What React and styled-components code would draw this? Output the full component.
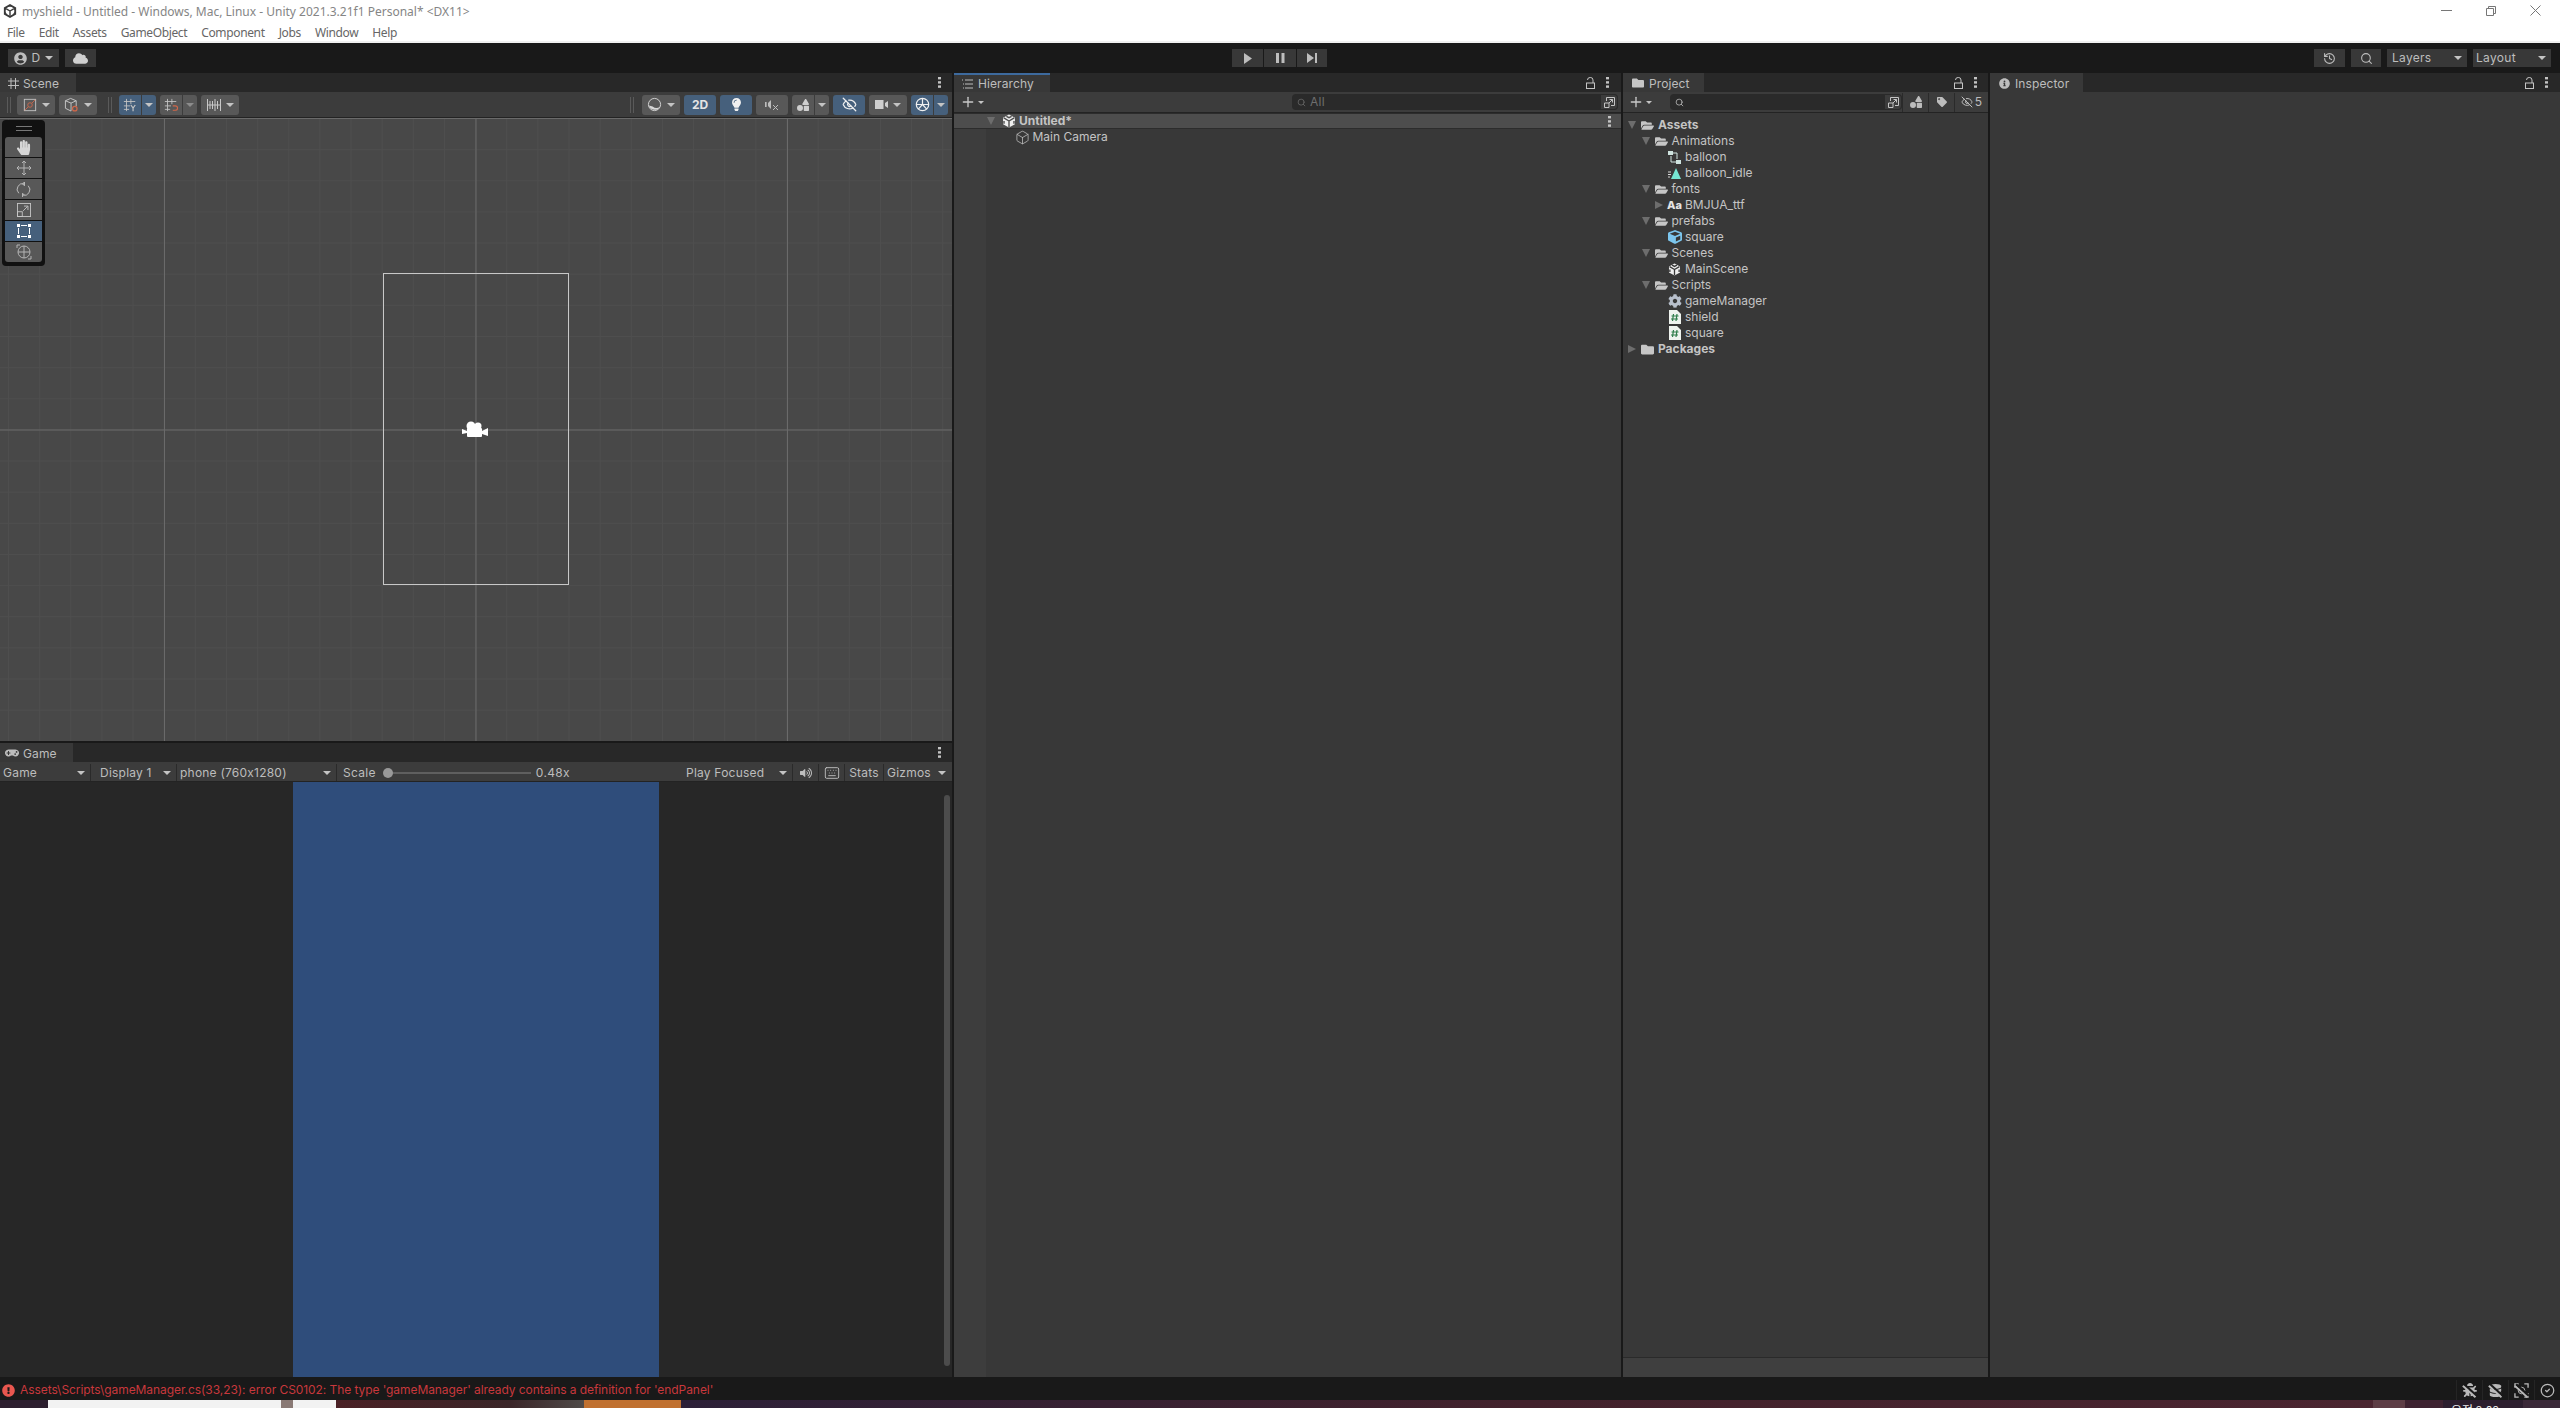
import React from 'react';
import styled, { createGlobalStyle } from 'styled-components';
import { FaHandPaper, FaGamepad, FaInfoCircle, FaUserCircle, FaCloud, FaFolder, FaFolderOpen, FaCube, FaCog, FaTag, FaVolumeUp, FaExclamationCircle, FaBug, FaDatabase, FaLightbulb, FaShapes } from 'react-icons/fa';
import { History, Search, EyeOff, Keyboard, CircleCheck, Box, Plus } from 'lucide-react';

const Global = createGlobalStyle`
  html, body { margin: 0; padding: 0; background: #191919; }
  * { box-sizing: border-box; }
  svg { display: block; flex: none; }
`;

const Page = styled.div`
  width: 2560px; height: 1408px; overflow: hidden; display: flex; flex-direction: column;
  font: 12px/16px Inter, "Liberation Sans", sans-serif; color: #c4c4c4; background: #191919;
`;
const TitleBar = styled.div`
  height: 21px; background: #fff; display: flex; align-items: center; padding-left: 3px; gap: 5px;
  font: 12px/21px "Noto Sans", sans-serif; color: #858585; flex: none;
`;
const TitleText = styled.span`
  padding-top: 2px;
`;
const WindowControls = styled.div`
  margin-left: auto; display: flex; gap: 34px; padding-right: 19px; color: #777; align-items: center;
`;
const MenuBar = styled.div`
  height: 22px; background: #fff; border-bottom: 2px solid #f0f0f0; display: flex; flex: none; padding-left: 7px; gap: 14px;
  font: 12px/23px "Noto Sans", sans-serif; color: #666; letter-spacing: -0.03em;
`;
const MainToolbar = styled.div`
  height: 30px; flex: none; background: #191919; display: grid; grid-template-columns: 1fr auto 1fr; padding: 6px 9px 6px 8px;
`;
const Cluster = styled.div`
  display: flex; gap: ${p => p.$gap ?? 6}px; justify-content: ${p => p.$end ? 'flex-end' : 'flex-start'};
`;
const TopBtn = styled.div`
  width: ${p => p.$w}px; height: 18px; background: #383838; display: flex; align-items: center;
  justify-content: ${p => p.$between ? 'space-between' : 'center'}; gap: 5px; color: #bdbdbd;
  padding: ${p => p.$between ? `0 5px 0 ${p.$pl ?? 3}px` : '0'}; font-size: 12px; letter-spacing: .3px;
`;
const Caret = styled.i`
  display: block; flex: none; width: 0; height: 0; border-left: ${p => p.$s ?? 4}px solid transparent;
  border-right: ${p => p.$s ?? 4}px solid transparent; border-top: ${p => p.$s ?? 4}px solid ${p => p.$c ?? '#c4c4c4'};
`;
const Workspace = styled.div`
  flex: 1; min-height: 0; display: grid; grid-template-columns: 952px 667px 365px 570px; column-gap: 2px; padding-bottom: 1px;
  & > * { min-width: 0; }
`;
const LeftColumn = styled.div`
  display: grid; grid-template-rows: 668px 1fr; row-gap: 2px; min-height: 0;
`;
const Panel = styled.section`
  display: flex; flex-direction: column; background: #383838; min-height: 0; position: relative;
`;
const TabStrip = styled.div`
  height: 19px; flex: none; background: #282828; display: flex; align-items: stretch;
`;
const Tab = styled.div`
  width: ${p => p.$w}px; background: #383838; display: flex; align-items: center; gap: ${p => p.$gap ?? 4}px;
  padding-left: ${p => p.$pl ?? 8}px; padding-top: ${p => p.$blue ? 0 : 1}px; color: #bdbdbd; letter-spacing: .1px; line-height: 19px;
  border-top: ${p => p.$blue ? '2px solid #3d6a9e' : '0'};
`;
const TabTools = styled.div`
  margin-left: auto; display: flex; align-items: center; gap: 11px; padding-right: ${p => p.$pr ?? 11}px; color: #c4c4c4;
`;
const Bar = styled.div`
  height: ${p => p.$h ?? 26}px; flex: none; background: #3c3c3c; border-bottom: 1px solid #232323; display: flex; align-items: center;
  padding: ${p => p.$pad ?? '0 4px 0 6px'};
`;
const BtnGroup = styled.div`
  display: flex; gap: 4px; align-items: center;
`;
const Handle = styled.div`
  width: 4px; height: 16px; border-left: 1px solid #5a5a5a; border-right: 1px solid #5a5a5a; margin: 0 ${p => p.$mr ?? 8}px 0 ${p => p.$ml ?? 0}px;
`;
const SceneBtn = styled.div`
  width: ${p => p.$w}px; height: 20px; border-radius: 3px; display: flex; align-items: center; justify-content: center;
  background: ${p => p.$on ? '#46607c' : '#585858'}; gap: 5px; color: #e4e4e4; font-weight: 700; font-size: 12px;
`;
const SplitPair = styled.div`
  display: flex; width: 37px; height: 20px; border-radius: 3px; overflow: hidden; gap: 1px;
`;
const SplitMain = styled.div`
  width: 22px; display: flex; align-items: center; justify-content: center; background: ${p => p.$on ? '#46607c' : '#585858'};
`;
const SplitArrow = styled.div`
  flex: 1; display: flex; align-items: center; justify-content: center; background: ${p => p.$on ? '#46607c' : '#585858'};
`;
const Spacer = styled.div`flex: 1;`;

const SceneView = styled.div`
  flex: 1; position: relative; overflow: hidden; background-color: #484848;
  background-image:
    linear-gradient(to right, #6a6a6a 1px, transparent 1px),
    linear-gradient(to bottom, #6a6a6a 1px, transparent 1px),
    linear-gradient(to right, #4e4e4e 1px, transparent 1px),
    linear-gradient(to bottom, #4e4e4e 1px, transparent 1px);
  background-size: 311.5px 311.5px, 311.5px 311.5px, 31.15px 31.15px, 31.15px 31.15px;
  background-position: 164px 0, 0 0, 8px 0, 0 0;
`;
const Overlay = styled.div`
  position: absolute; left: 2px; top: 2px; width: 43px; height: 146px; background: #111; border-radius: 4px;
  padding: 0 3px; display: flex; flex-direction: column; gap: 1px;
`;
const OverlayGrip = styled.div`
  height: 16px; flex: none; display: flex; align-items: center; justify-content: center;
  &::before { content: ''; width: 16px; height: 3px; border-top: 1px solid #777; border-bottom: 1px solid #777; }
`;
const ToolBtn = styled.div`
  height: 20px; flex: none; display: flex; align-items: center; justify-content: center; background: ${p => p.$on ? '#46607c' : '#585858'};
  color: #c8c8c8;
  border-radius: ${p => p.$first ? '3px 3px 0 0' : p.$last ? '0 0 3px 3px' : '0'};
`;
const CameraFrame = styled.div`
  position: absolute; left: 383px; top: 155px; width: 186px; height: 312px; border: 1px solid #c8c8c8;
`;
const CameraGizmo = styled.div`
  position: absolute; left: 461px; top: 302px; color: #fff;
`;

const GameBar = styled.div`
  height: 20px; flex: none; background: #3c3c3c; border-bottom: 1px solid #232323; display: flex; align-items: stretch; padding-top: 2px;
`;
const GameCell = styled.div`
  width: ${p => p.$w}px; flex: none; display: flex; align-items: center; justify-content: ${p => p.$center ? 'center' : 'space-between'};
  padding: ${p => p.$pad ?? '0 5px 0 3px'}; border-right: ${p => p.$nb ? '0' : '1px solid #2a2a2a'}; letter-spacing: .22px; color: #bdbdbd;
`;
const ScaleCell = styled.div`
  flex: 1; display: flex; align-items: center; padding-left: 6px; letter-spacing: .3px; color: #bdbdbd;
`;
const ScaleTrack = styled.div`
  width: 144px; height: 2px; background: #5f5f5f; margin: 0 5px 0 11px; position: relative;
  &::before { content: ''; position: absolute; left: -4px; top: -4px; width: 10px; height: 10px; border-radius: 50%; background: #999; }
`;
const GameView = styled.div`
  flex: 1; position: relative; background: #272727; display: flex; justify-content: center;
`;
const GameScreen = styled.div`
  width: 366px; background: #2f4d7b;
`;
const GameScroll = styled.div`
  position: absolute; left: 944px; top: 13px; bottom: 11px; width: 6px; background: #4c4c4c; border-radius: 3px;
`;

const TreeArea = styled.div`
  flex: 1; padding-top: ${p => p.$pt ?? 0}px; background: ${p => p.$strip ? 'linear-gradient(to right, #3d3d3d 32px, #383838 32px)' : '#383838'};
`;
const Row = styled.div`
  height: 16px; display: flex; align-items: center; white-space: nowrap; color: #c4c4c4;
  padding-left: ${p => (p.$base ?? 5) + 13.5 * (p.$level ?? 0)}px; font-weight: ${p => p.$bold ? 700 : 400};
  background: ${p => p.$hl ? '#4d4d4d' : 'transparent'}; box-shadow: ${p => p.$hl ? 'inset 0 -1px #2c2c2c, inset 0 1px #2c2c2c' : 'none'};
`;
const ArrowCell = styled.div`
  width: ${p => p.$w ?? 13}px; flex: none; display: flex; align-items: center;
`;
const Down = styled.i`
  display: block; width: 0; height: 0; border-left: 4px solid transparent; border-right: 4px solid transparent; border-top: 8px solid #6d6d6d;
`;
const RightTri = styled.i`
  display: block; width: 0; height: 0; border-top: 4px solid transparent; border-bottom: 4px solid transparent; border-left: 8px solid #6d6d6d;
`;
const IconCell = styled.div`
  width: ${p => p.$w ?? 13}px; height: 14px; flex: none; margin-right: 4px; display: flex; align-items: center; justify-content: center; color: #c4c4c4;
`;
const RowEnd = styled.div`
  margin-left: auto; padding-right: 10px; color: #c4c4c4;
`;
const SearchBox = styled.div`
  height: 16px; background: #2a2a2a; border-radius: 4px; display: flex; align-items: center; padding-left: 5px; gap: 4px; overflow: hidden;
  width: ${p => p.$w}px; margin-left: ${p => p.$ml ?? 0}px; color: #6e6e6e; flex: none; letter-spacing: .3px;
`;
const SearchEnd = styled.div`
  margin-left: auto; width: 18px; height: 16px; background: #3c3c3c; border: 1px solid #2a2a2a; border-radius: 0 4px 4px 0; display: flex; align-items: center; justify-content: center; color: #c4c4c4;
`;
const BarBtn = styled.div`
  width: ${p => p.$w}px; height: 19px; flex: none; display: flex; align-items: center; justify-content: center; gap: 2px; border-left: 1px solid #2a2a2a; color: #bdbdbd; font-size: 12px;
`;
const AddBtn = styled.div`
  display: flex; align-items: center; gap: 2px; color: #c8c8c8;
`;
const AaText = styled.span`
  font-size: 11px; font-weight: 800; color: #e4e4e4; letter-spacing: 0;
`;
const ProjectFooter = styled.div`
  height: 20px; flex: none; background: #3f3f3f; border-top: 1px solid #2a2a2a;
`;

const StatusBar = styled.div`
  height: 22px; flex: none; background: #191919; display: flex; align-items: center; padding: 2px 0 0 2px; gap: 5px;
  color: #c8383c; font-size: 12px; letter-spacing: -0.07px; white-space: nowrap;
`;
const StatusIcons = styled.div`
  margin-left: auto; display: flex; height: 100%; color: #b9b9b9;
`;
const StatusIcon = styled.div`
  width: 26px; display: flex; align-items: center; justify-content: center; border-left: 1px solid #252525; position: relative;
  ${p => p.$slash ? `&::after { content: ''; position: absolute; left: 5px; width: 17px; height: 2px; background: #191919; transform: rotate(42deg); box-shadow: 0 2px 0 #b9b9b9; }` : ''}
`;
const Taskbar = styled.div`
  height: 8px; flex: none; overflow: hidden; display: flex; background: #2c1e2e;
`;
const TaskSeg = styled.div`
  width: ${p => p.$w}px; flex: none; background: ${p => p.$bg};
`;
const TaskClock = styled.div`
  width: 80px; flex: none; padding: 3px 0 0 8px; color: #eee; font: 12px/14px "Noto Sans CJK KR", sans-serif; white-space: nowrap;
`;

const S = ({ w = 14, h = 14, vb = '0 0 16 16', children }) => (
  <svg width={w} height={h} viewBox={vb} fill="none" stroke="currentColor" strokeWidth="1">{children}</svg>
);
const UnityLogo = ({ s = 13, c = '#fff', bg = '#383838' }) => (
  <svg width={s} height={s} viewBox="0 0 16 16">
    <polygon points="8,0.5 14.8,4.2 14.8,11.8 8,15.5 1.2,11.8 1.2,4.2" fill={c} />
    <path d="M8 8V15M8 8L2 4.4M8 8l6-3.6M5 2.6 8 4.2l3-1.6M2.3 8V11M13.7 8V11" stroke={bg} strokeWidth="1.6" fill="none" />
  </svg>
);
const Lock = () => (
  <S w={9} h={12} vb="0 0 9 12"><rect x=".5" y="6" width="8" height="5.5" /><path d="M1.5 3a2.7 2.5 0 0 1 5.5 0V6" /></S>
);
const Kebab = () => (
  <svg width="3" height="11" viewBox="0 0 3 11" fill="currentColor"><rect y="0" width="3" height="2.4" /><rect y="4.2" width="3" height="2.4" /><rect y="8.4" width="3" height="2.4" /></svg>
);
const Hash = () => (
  <S w={11} h={11} vb="0 0 11 11"><path d="M3 0v11M7.5 0v11M0 3h11M0 7.5h11" stroke="#bdbdbd" /></S>
);
const ListIcon = () => (
  <S w={11} h={10} vb="0 0 11 10"><path d="M3 1h8M3 5h8M3 9h8M0 1h1M1 5h1M1 9h1" /></S>
);
const ExpandIcon = () => (
  <S w={11} h={11} vb="0 0 11 11"><path d="M2.5 4V.5h8v8H7M.5 6h4.5v4.5H.5zM5 6l3.5-3.5M5.5 2.5h3v3" /></S>
);
const SnapGrid = ({ glyph }) => (
  <S w={14} h={14}>
    <path d="M4 1v14M9 1v6M1 4h13M1 9h7M1 13h6" />
    {glyph === 'y' ? <path d="M9 8l2.5 3.5L14 8M11.5 11.5V15" strokeWidth="1.4" /> : <path d="M10 9h3a2.5 2.5 0 0 1 0 5h-3" stroke="#d0674a" strokeWidth="1.3" />}
  </S>
);
const Camera = () => (
  <svg width="28" height="20" viewBox="0 0 28 20" fill="#fff">
    <circle cx="10" cy="6" r="4.5" /><circle cx="17" cy="6" r="3.5" /><rect x="6" y="8" width="15" height="9" rx="1" />
    <polygon points="21,11 27,8 27,16 21,14" /><polygon points="6,11 1,9 1,14 6,13" />
  </svg>
);
const ScriptFile = () => (
  <svg width="12" height="14" viewBox="0 0 12 14">
    <path d="M0 0h8l4 4v10H0z" fill="#eef3ee" />
    <path d="M4.5 4 3.5 11M8 4 7 11M2.5 6h7M2 9h7" stroke="#2e7d4a" strokeWidth="1.2" fill="none" />
  </svg>
);
const ClipIcon = () => (
  <svg width="13" height="13" viewBox="0 0 13 13" fill="#cfe3df">
    <rect x="0" y="0" width="5" height="4" /><rect x="8" y="9" width="5" height="4" />
    <path d="M5 2h4v6M8 11H3V5" stroke="#cfe3df" fill="none" />
  </svg>
);
const AnimIcon = () => (
  <svg width="13" height="11" viewBox="0 0 13 11"><polygon points="8,0 13,11 3,11" fill="#75e6d2" /><path d="M0 4h3M0 6.5h3M0 9h2" stroke="#d8d8d8" /></svg>
);
const Tri = ({ c = '#bdbdbd', w = 8, h = 11 }) => (
  <svg width={w} height={h} viewBox="0 0 8 11" fill={c}><polygon points="0,0 8,5.5 0,11" /></svg>
);
const TitleLogo = () => (
  <svg width="14" height="14" viewBox="0 0 16 16">
    <polygon points="8,0 15,4 15,12 8,16 1,12 1,4" fill="#3a3a3a" />
    <circle cx="8" cy="8" r="5" fill="#fff" /><path d="M8 8v5M8 8 3.8 5.5M8 8l4.2-2.5" stroke="#3a3a3a" strokeWidth="1.6" />
  </svg>
);

const projectRows = [
  { l: 0, t: 'Assets', b: true, a: 'd', i: 'open' },
  { l: 1, t: 'Animations', a: 'd', i: 'open' },
  { l: 2, t: 'balloon', i: 'clip' },
  { l: 2, t: 'balloon_idle', i: 'anim' },
  { l: 1, t: 'fonts', a: 'd', i: 'open' },
  { l: 2, t: 'BMJUA_ttf', a: 'r', i: 'aa' },
  { l: 1, t: 'prefabs', a: 'd', i: 'open' },
  { l: 2, t: 'square', i: 'prefab' },
  { l: 1, t: 'Scenes', a: 'd', i: 'open' },
  { l: 2, t: 'MainScene', i: 'unity' },
  { l: 1, t: 'Scripts', a: 'd', i: 'open' },
  { l: 2, t: 'gameManager', i: 'gear' },
  { l: 2, t: 'shield', i: 'script' },
  { l: 2, t: 'square', i: 'script' },
  { l: 0, t: 'Packages', b: true, a: 'r', i: 'folder' },
];
const iconFor = (k) => {
  switch (k) {
    case 'open': return <FaFolderOpen size={13} color="#c6c6c6" />;
    case 'folder': return <FaFolder size={13} color="#c6c6c6" />;
    case 'clip': return <ClipIcon />;
    case 'anim': return <AnimIcon />;
    case 'aa': return <AaText>Aa</AaText>;
    case 'prefab': return <FaCube size={14} color="#7cc6ee" />;
    case 'unity': return <UnityLogo s={13} c="#eee" />;
    case 'gear': return <FaCog size={14} color="#b8c0cc" />;
    default: return <ScriptFile />;
  }
};

export default function App() {
  return (
    <Page>
      <Global />
      <TitleBar>
        <TitleLogo />
        <TitleText>myshield - Untitled - Windows, Mac, Linux - Unity 2021.3.21f1 Personal* &lt;DX11&gt;</TitleText>
        <WindowControls>
          <S w={11} h={11} vb="0 0 11 11"><path d="M0 5.5h11" /></S>
          <S w={10} h={10} vb="0 0 10 10"><path d="M.5 2.5h7v7h-7zM2.5 2.5v-2h7v7h-2" /></S>
          <S w={11} h={11} vb="0 0 11 11"><path d="M.5.5l10 10M10.5.5l-10 10" /></S>
        </WindowControls>
      </TitleBar>
      <MenuBar>
        {['File', 'Edit', 'Assets', 'GameObject', 'Component', 'Jobs', 'Window', 'Help'].map(m => <span key={m}>{m}</span>)}
      </MenuBar>
      <MainToolbar>
        <Cluster>
          <TopBtn $w={51}><FaUserCircle size={13} />D<Caret $s={4} /></TopBtn>
          <TopBtn $w={31}><FaCloud size={15} color="#d0d0d0" /></TopBtn>
        </Cluster>
        <Cluster $gap={1}>
          <TopBtn $w={31}><Tri /></TopBtn>
          <TopBtn $w={32}><svg width="9" height="10" viewBox="0 0 9 10" fill="#bdbdbd"><rect width="3" height="10" /><rect x="5.5" width="3" height="10" /></svg></TopBtn>
          <TopBtn $w={30}><svg width="10" height="10" viewBox="0 0 10 10" fill="#bdbdbd"><polygon points="0,0 7,5 0,10" /><rect x="8" width="2" height="10" /></svg></TopBtn>
        </Cluster>
        <Cluster $end>
          <TopBtn $w={31}><History size={13} /></TopBtn>
          <TopBtn $w={30}><Search size={13} /></TopBtn>
          <TopBtn $w={80} $between $pl={5}>Layers<Caret $s={4} /></TopBtn>
          <TopBtn $w={78} $between>Layout<Caret $s={4} /></TopBtn>
        </Cluster>
      </MainToolbar>
      <Workspace>
        <LeftColumn>
          <Panel>
            <TabStrip>
              <Tab $w={76}><Hash />Scene</Tab>
              <TabTools><Kebab /></TabTools>
            </TabStrip>
            <Bar>
              <Handle $ml={1} $mr={6} />
              <BtnGroup>
                <SceneBtn $w={38}><S w={14} h={14}><rect x="1.5" y="1.5" width="13" height="13" stroke="#c8c8c8" /><circle cx="8" cy="8" r="2.6" stroke="#d0674a" /><path d="M2 14 6 10M10 6l4-4" stroke="#d0674a" /></S><Caret /></SceneBtn>
                <SceneBtn $w={38}><S w={15} h={15}><path d="M7 1.5 13 4v6M7 1.5 1.5 4v8l6 3M1.5 4l6 2.5 5.5-2.5M7.5 6.5V15" stroke="#c8c8c8" /><circle cx="11.5" cy="12.5" r="2.4" stroke="#d0674a" strokeWidth="1.3" /></S><Caret /></SceneBtn>
              </BtnGroup>
              <Handle $ml={11} $mr={7} />
              <BtnGroup>
                <SplitPair><SplitMain $on><SnapGrid glyph="y" /></SplitMain><SplitArrow $on><Caret /></SplitArrow></SplitPair>
                <SplitPair><SplitMain><SnapGrid glyph="m" /></SplitMain><SplitArrow><Caret $c="#8c8c8c" /></SplitArrow></SplitPair>
                <SceneBtn $w={38}><S w={14} h={12} vb="0 0 14 12"><path d="M.5 0v12M13.5 0v12M.5 6h13M3 2v8M5.5 2v8M8 0v12M10.5 2v8" stroke="#c8c8c8" /></S><Caret /></SceneBtn>
              </BtnGroup>
              <Spacer />
              <Handle $mr={8} />
              <BtnGroup>
                <SceneBtn $w={38}><svg width="15" height="15" viewBox="0 0 16 16" fill="none"><circle cx="8" cy="8" r="6.5" stroke="#d8d8d8" /><path d="M2 9a6.5 6.5 0 0 0 12 1a6 6 0 0 1-8 0z" fill="#d8d8d8" /></svg><Caret /></SceneBtn>
                <SceneBtn $w={32} $on>2D</SceneBtn>
                <SceneBtn $w={32} $on><FaLightbulb size={13} color="#f0f0f0" /></SceneBtn>
                <SceneBtn $w={32}><svg width="14" height="12" viewBox="0 0 14 12" fill="#bdbdbd"><rect x="0" y="3" width="1.6" height="5" /><polygon points="3,4 6,1 6,10 3,7" /><path d="M8 6l5 5M13 6l-5 5" stroke="#bdbdbd" fill="none" /></svg></SceneBtn>
                <SplitPair><SplitMain><FaShapes size={12} color="#cfcfcf" /></SplitMain><SplitArrow><Caret /></SplitArrow></SplitPair>
                <SceneBtn $w={32} $on><EyeOff size={15} color="#f0f0f0" /></SceneBtn>
                <SceneBtn $w={38}><svg width="13" height="9" viewBox="0 0 13 9" fill="#cfcfcf"><rect width="8.5" height="9" /><polygon points="10,3 13,1 13,8 10,6" /></svg><Caret /></SceneBtn>
                <SplitPair><SplitMain $on><svg width="15" height="15" viewBox="0 0 16 16" fill="none" stroke="#f0f0f0" strokeWidth="1.3"><circle cx="8" cy="8" r="6.6" /><path d="M1.5 8h13M8 1.5V8L3.5 13M8 8l4.5 5" /></svg></SplitMain><SplitArrow $on><Caret /></SplitArrow></SplitPair>
              </BtnGroup>
            </Bar>
            <SceneView>
              <CameraFrame />
              <CameraGizmo><Camera /></CameraGizmo>
              <Overlay>
                <OverlayGrip />
                <ToolBtn $first><FaHandPaper size={15} color="#d6d6d6" /></ToolBtn>
                <ToolBtn><S w={16} h={16}><path d="M8 1v14M1 8h14M6 3l2-2 2 2M6 13l2 2 2-2M3 6 1 8l2 2M13 6l2 2-2 2" stroke="#b4b4b4" /></S></ToolBtn>
                <ToolBtn><S w={15} h={15}><path d="M3 12A6 6 0 0 1 9 2M13 4a6 6 0 0 1-6 10M9 0v4L7 2zM7 16v-4l2 2" stroke="#c0c0c0" /></S></ToolBtn>
                <ToolBtn><S w={14} h={14}><rect x=".5" y=".5" width="15" height="15" stroke="#c8c8c8" /><rect x=".5" y="10" width="5.5" height="5.5" stroke="#c8c8c8" /><path d="M7 9l5-5M8 3.5h4.5V8" stroke="#c8c8c8" /></S></ToolBtn>
                <ToolBtn $on><svg width="14" height="14" viewBox="0 0 14 14" fill="#fff"><rect width="3" height="3" /><rect x="11" width="3" height="3" /><rect y="11" width="3" height="3" /><rect x="11" y="11" width="3" height="3" /><path d="M4 1.5h6M4 12.5h6M1.5 4v6M12.5 4v6" stroke="#fff" fill="none" /></svg></ToolBtn>
                <ToolBtn $last><S w={16} h={16}><circle cx="8" cy="8" r="6" stroke="#b4b4b4" /><path d="M8 2v12M2 8h12M4 1 1 1v3M12 15h3v-3" stroke="#b4b4b4" /></S></ToolBtn>
              </Overlay>
            </SceneView>
          </Panel>
          <Panel>
            <TabStrip>
              <Tab $w={73} $pl={5}><FaGamepad size={14} />Game</Tab>
              <TabTools><Kebab /></TabTools>
            </TabStrip>
            <GameBar>
              <GameCell $w={91}>Game<Caret /></GameCell>
              <GameCell $w={86} $pad="0 5px 0 9px">Display 1<Caret /></GameCell>
              <GameCell $w={160}>phone (760x1280)<Caret /></GameCell>
              <ScaleCell>Scale<ScaleTrack />0.48x</ScaleCell>
              <GameCell $w={110}>Play Focused<Caret /></GameCell>
              <GameCell $w={26} $center $pad="0"><FaVolumeUp size={12} /></GameCell>
              <GameCell $w={26} $center $pad="0"><Keyboard size={16} strokeWidth={1.4} /></GameCell>
              <GameCell $w={39} $center $pad="0">Stats</GameCell>
              <GameCell $w={68} $nb $pad="0 6px 0 3px">Gizmos<Caret /></GameCell>
            </GameBar>
            <GameView>
              <GameScreen />
              <GameScroll />
            </GameView>
          </Panel>
        </LeftColumn>

        <Panel>
          <TabStrip>
            <Tab $w={96} $blue $gap={5}><ListIcon />Hierarchy</Tab>
            <TabTools $pr={12}><Lock /><Kebab /></TabTools>
          </TabStrip>
          <Bar $h={21} $pad="0 3px 0 6px">
            <AddBtn><Plus size={16} strokeWidth={2} /><Caret $s={3} /></AddBtn>
            <Spacer />
            <SearchBox $w={326}>
              <Search size={9} />All
              <SearchEnd><ExpandIcon /></SearchEnd>
            </SearchBox>
          </Bar>
          <TreeArea $strip>
            <Row $hl $bold $base={33}>
              <ArrowCell $w={15}><Down /></ArrowCell>
              <IconCell><UnityLogo s={14} c="#eee" bg="#4d4d4d" /></IconCell>
              Untitled*
              <RowEnd><Kebab /></RowEnd>
            </Row>
            <Row $level={1} $base={33}>
              <ArrowCell $w={15} />
              <IconCell><Box size={15} strokeWidth={1.2} /></IconCell>
              Main Camera
            </Row>
          </TreeArea>
        </Panel>

        <Panel>
          <TabStrip>
            <Tab $w={81} $pl={9} $gap={5}><FaFolder size={12} color="#c6c6c6" />Project</Tab>
            <TabTools $pr={11}><Lock /><Kebab /></TabTools>
          </TabStrip>
          <Bar $h={21} $pad="0 0 0 5px">
            <AddBtn><Plus size={16} strokeWidth={2} /><Caret $s={3} /></AddBtn>
            <SearchBox $w={232} $ml={18}>
              <Search size={9} color="#c4c4c4" />
              <SearchEnd><ExpandIcon /></SearchEnd>
            </SearchBox>
            <BarBtn $w={26}><FaShapes size={12} /></BarBtn>
            <BarBtn $w={26}><FaTag size={10} /></BarBtn>
            <BarBtn $w={34}><EyeOff size={12} />5</BarBtn>
          </Bar>
          <TreeArea $pt={4}>
            {projectRows.map((r, i) => (
              <Row key={i} $level={r.l} $bold={r.b}>
                <ArrowCell>{r.a === 'd' ? <Down /> : r.a === 'r' ? <RightTri /> : null}</ArrowCell>
                <IconCell>{iconFor(r.i)}</IconCell>
                {r.t}
              </Row>
            ))}
          </TreeArea>
          <ProjectFooter />
        </Panel>

        <Panel>
          <TabStrip>
            <Tab $w={93} $pl={9} $gap={5}><FaInfoCircle size={11} />Inspector</Tab>
            <TabTools $pr={12}><Lock /><Kebab /></TabTools>
          </TabStrip>
        </Panel>
      </Workspace>
      <StatusBar>
        <FaExclamationCircle size={13} color="#e9574f" />
        Assets\Scripts\gameManager.cs(33,23): error CS0102: The type 'gameManager' already contains a definition for 'endPanel'
        <StatusIcons>
          <StatusIcon $slash><FaBug size={14} /></StatusIcon>
          <StatusIcon $slash><FaDatabase size={13} /></StatusIcon>
          <StatusIcon $slash><S w={15} h={15}><circle cx="8" cy="8" r="3.5" /><path d="M1 5V1h4M15 5V1h-4M1 11v4h4M15 11v4h-4" strokeWidth="1.4" /></S></StatusIcon>
          <StatusIcon><CircleCheck size={15} /></StatusIcon>
        </StatusIcons>
      </StatusBar>
      <Taskbar>
        <TaskSeg $w={48} $bg="#2c1e2e" />
        <TaskSeg $w={288} $bg="linear-gradient(to right, #f2f2f2 81%, #8a7a75 81%, #8a7a75 85%, #f2f2f2 85%)" />
        <TaskSeg $w={248} $bg="linear-gradient(to right, #4a2025, #3a2528 70%, #4f4a48)" />
        <TaskSeg $w={97} $bg="#c0702f" />
        <TaskSeg $w={1692} $bg="linear-gradient(to right, #2c2038 0%, #42222c 50%, #4a2530 100%)" />
        <TaskSeg $w={32} $bg="#5d3d45" />
        <TaskSeg $w={38} $bg="#3d2230" />
        <TaskClock>오전 9:09</TaskClock>
        <TaskSeg $w={40} $bg="#3a2838" />
      </Taskbar>
    </Page>
  );
}
